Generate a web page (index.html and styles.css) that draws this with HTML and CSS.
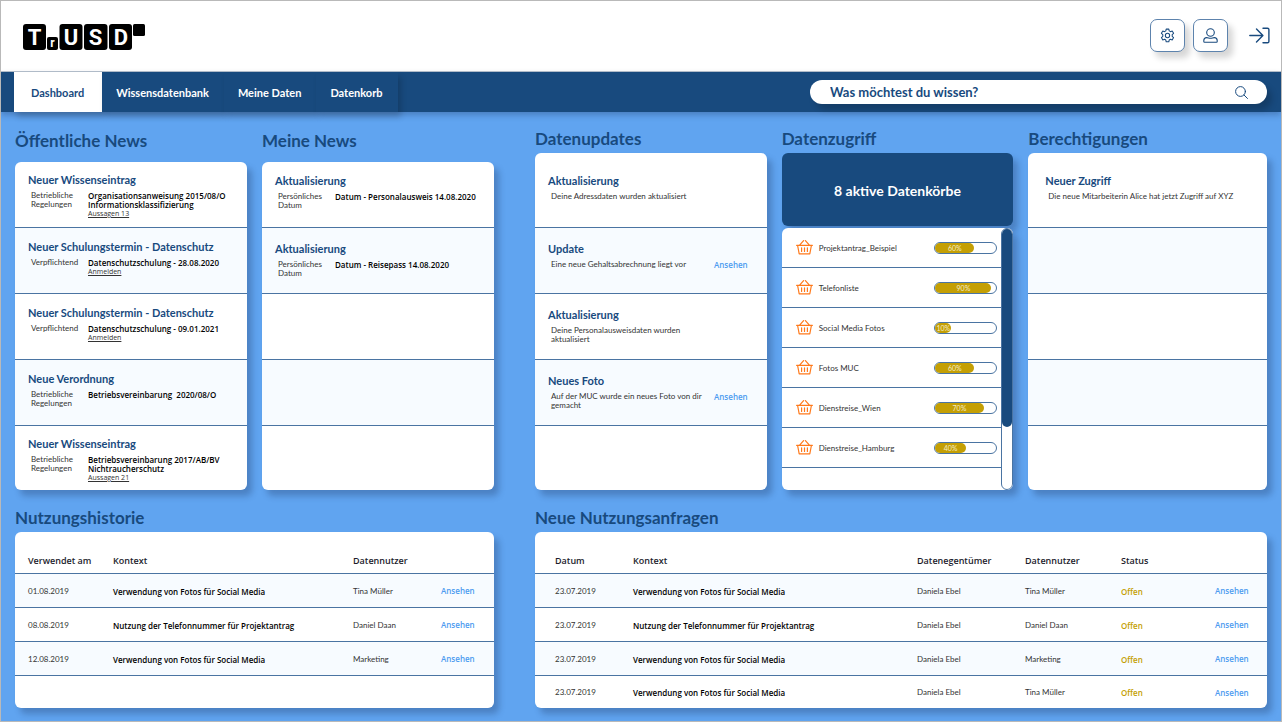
FILE: index.html
```
<!DOCTYPE html>
<html lang="de">
<head>
<meta charset="utf-8">
<meta name="viewport" content="width=device-width, initial-scale=1">
<title>TrUSD – Dashboard</title>
<link rel="stylesheet" href="styles.css">
</head>
<body>
<svg class="sprite" aria-hidden="true">
  <symbol id="basket" viewBox="0 0 17 15">
    <path d="M.6 5.300h15.800M1.600 5.500l1.600 8.400h10.600l1.600-8.400M3.600 5.100l4-4.500M13.400 5.100l-4-4.500M5.600 7.800v3.600M8.500 7.800v3.600M11.400 7.800v3.600" fill="none" stroke="currentColor" stroke-width="1.200" stroke-linecap="round" stroke-linejoin="round"/>
  </symbol>
</svg>

<header class="topbar">
  <a class="logo" href="#" aria-label="TrUSD">
    <svg width="123" height="28" viewBox="0 0 123 28" aria-hidden="true">
      <g fill="#000">
        <rect x="0" y="1" width="23" height="26" rx="3"/>
        <rect x="24" y="14" width="11" height="13" rx="2"/>
        <rect x="36.500" y="1" width="23" height="26" rx="3"/>
        <rect x="61" y="1" width="23.500" height="26" rx="3"/>
        <rect x="86" y="1" width="23" height="26" rx="3"/>
        <rect x="110" y="1" width="12" height="12" rx="1.500"/>
      </g>
      <g class="logo-letters" text-anchor="middle">
        <text x="11.500" y="22">T</text>
        <text class="logo-small" x="29.500" y="24">r</text>
        <text x="48" y="22">U</text>
        <text x="72.500" y="22">S</text>
        <text x="98" y="22">D</text>
      </g>
    </svg>
  </a>
  <div class="actions">
    <button class="tool" type="button" aria-label="Einstellungen">
      <svg width="15" height="15" viewBox="0 0 16 16" fill="none" stroke="currentColor" stroke-width="1.100" stroke-linejoin="round"><path d="M6.600 1.200h2.800l.4 1.900 1.400.8 1.800-.7 1.500 2.500-1.500 1.300v1.900l1.500 1.300-1.500 2.500-1.800-.7-1.400.8-.4 1.900H6.600l-.4-1.900-1.400-.8-1.800.7-1.500-2.500L3 8.900V7L1.500 5.700 3 3.200l1.800.7 1.400-.8z"/><circle cx="8" cy="8" r="2.300"/></svg>
    </button>
    <button class="tool" type="button" aria-label="Profil">
      <svg width="15" height="15" viewBox="0 0 15 15" fill="none" stroke="currentColor" stroke-width="1.100"><circle cx="7.500" cy="4.500" r="3.800"/><path d="M.8 13.400v-.8c0-1.900 1.200-3 3-3 1.300 0 2 .7 3.700.7s2.400-.7 3.700-.7c1.800 0 3 1.100 3 3v.8c0 .5-.3.8-.8.8H1.600c-.5 0-.8-.3-.8-.8z"/></svg>
    </button>
    <button class="exit" type="button" aria-label="Abmelden">
      <svg width="21" height="17" viewBox="0 0 21 17" fill="none" stroke="currentColor" stroke-width="1.400" stroke-linecap="round" stroke-linejoin="round"><path d="M.8 8.500h13M7.500 2l6.400 6.500L7.500 15M14 1.200h4.500c.9 0 1.400.5 1.400 1.400v11.800c0 .9-.5 1.400-1.400 1.400H14"/></svg>
    </button>
  </div>
</header>

<div class="navbar">
  <nav class="tabs">
    <a class="tab tab-active" href="#" aria-current="page">Dashboard</a>
    <a class="tab" href="#">Wissensdatenbank</a>
    <a class="tab" href="#">Meine Daten</a>
    <a class="tab" href="#">Datenkorb</a>
  </nav>
  <form class="search" role="search">
    <input type="search" placeholder="Was möchtest du wissen?" aria-label="Suche">
    <button type="button" aria-label="Suchen">
      <svg width="13" height="13" viewBox="0 0 13 13" fill="none" stroke="currentColor" stroke-width="1" stroke-linecap="round"><circle cx="5.500" cy="5.500" r="4.900"/><path d="M9 9l3.500 3.500"/></svg>
    </button>
  </form>
</div>

<main class="board">
  <div class="half half-left">
    <div class="panels">
      <section class="panel">
        <h2>Öffentliche News</h2>
        <ul class="card rows">
          <li class="entry">
            <h3>Neuer Wissenseintrag</h3>
            <div class="detail"><p class="kind">Betriebliche Regelungen</p><p class="subject">Organisationsanweisung 2015/08/O<br>Informationsklassifizierung<a href="#">Aussagen 13</a></p></div>
          </li>
          <li class="entry">
            <h3>Neuer Schulungstermin - Datenschutz</h3>
            <div class="detail"><p class="kind">Verpflichtend</p><p class="subject">Datenschutzschulung - 28.08.2020<a href="#">Anmelden</a></p></div>
          </li>
          <li class="entry">
            <h3>Neuer Schulungstermin - Datenschutz</h3>
            <div class="detail"><p class="kind">Verpflichtend</p><p class="subject">Datenschutzschulung - 09.01.2021<a href="#">Anmelden</a></p></div>
          </li>
          <li class="entry">
            <h3>Neue Verordnung</h3>
            <div class="detail"><p class="kind">Betriebliche Regelungen</p><p class="subject">Betriebsvereinbarung&nbsp; 2020/08/O</p></div>
          </li>
          <li class="entry">
            <h3>Neuer Wissenseintrag</h3>
            <div class="detail"><p class="kind">Betriebliche Regelungen</p><p class="subject">Betriebsvereinbarung 2017/AB/BV<br>Nichtraucherschutz<a href="#">Aussagen 21</a></p></div>
          </li>
        </ul>
      </section>
      <section class="panel">
        <h2>Meine News</h2>
        <ul class="card rows rows-airy">
          <li class="entry">
            <h3>Aktualisierung</h3>
            <div class="detail"><p class="kind">Persönliches Datum</p><p class="subject">Datum - Personalausweis 14.08.2020</p></div>
          </li>
          <li class="entry">
            <h3>Aktualisierung</h3>
            <div class="detail"><p class="kind">Persönliches Datum</p><p class="subject">Datum - Reisepass 14.08.2020</p></div>
          </li>
          <li class="entry"></li>
          <li class="entry"></li>
          <li class="entry"></li>
        </ul>
      </section>
    </div>
    <section class="usage">
      <h2>Nutzungshistorie</h2>
      <div class="card">
        <table class="history">
          <colgroup><col class="c-date"><col class="c-context"><col class="c-user"><col class="c-action"></colgroup>
          <thead><tr><th>Verwendet am</th><th>Kontext</th><th>Datennutzer</th><th></th></tr></thead>
          <tbody>
            <tr><td>01.08.2019</td><td class="strong">Verwendung von Fotos für Social Media</td><td>Tina Müller</td><td><a class="view" href="#">Ansehen</a></td></tr>
            <tr><td>08.08.2019</td><td class="strong">Nutzung der Telefonnummer für Projektantrag</td><td>Daniel Daan</td><td><a class="view" href="#">Ansehen</a></td></tr>
            <tr><td>12.08.2019</td><td class="strong">Verwendung von Fotos für Social Media</td><td>Marketing</td><td><a class="view" href="#">Ansehen</a></td></tr>
            <tr><td></td><td></td><td></td><td></td></tr>
          </tbody>
        </table>
      </div>
    </section>
  </div>

  <div class="half half-right">
    <div class="panels">
      <section class="panel">
        <h2>Datenupdates</h2>
        <ul class="card rows rows-airy">
          <li class="entry"><h3>Aktualisierung</h3><div class="detail"><p class="message">Deine Adressdaten wurden aktualisiert</p></div></li>
          <li class="entry"><h3>Update</h3><div class="detail"><p class="message">Eine neue Gehaltsabrechnung liegt vor</p><a class="view" href="#">Ansehen</a></div></li>
          <li class="entry"><h3>Aktualisierung</h3><div class="detail"><p class="message">Deine Personalausweisdaten wurden<br>aktualisiert</p></div></li>
          <li class="entry"><h3>Neues Foto</h3><div class="detail"><p class="message">Auf der MUC wurde ein neues Foto von dir<br>gemacht</p><a class="view" href="#">Ansehen</a></div></li>
          <li class="entry"></li>
        </ul>
      </section>
      <section class="panel">
        <h2>Datenzugriff</h2>
        <p class="banner">8 aktive Datenkörbe</p>
        <div class="card baskets">
          <ul class="basket-list">
            <li><svg class="basket"><use href="#basket"/></svg><span>Projektantrag_Beispiel</span><div class="meter" role="progressbar" aria-label="Projektantrag_Beispiel" aria-valuenow="60"><div class="fill" style="width:64%">60%</div></div></li>
            <li><svg class="basket"><use href="#basket"/></svg><span>Telefonliste</span><div class="meter" role="progressbar" aria-label="Telefonliste" aria-valuenow="90"><div class="fill" style="width:92%">90%</div></div></li>
            <li><svg class="basket"><use href="#basket"/></svg><span>Social Media Fotos</span><div class="meter" role="progressbar" aria-label="Social Media Fotos" aria-valuenow="10"><div class="fill" style="width:26%">10%</div></div></li>
            <li><svg class="basket"><use href="#basket"/></svg><span>Fotos MUC</span><div class="meter" role="progressbar" aria-label="Fotos MUC" aria-valuenow="60"><div class="fill" style="width:64%">60%</div></div></li>
            <li><svg class="basket"><use href="#basket"/></svg><span>Dienstreise_Wien</span><div class="meter" role="progressbar" aria-label="Dienstreise_Wien" aria-valuenow="70"><div class="fill" style="width:79%">70%</div></div></li>
            <li><svg class="basket"><use href="#basket"/></svg><span>Dienstreise_Hamburg</span><div class="meter" role="progressbar" aria-label="Dienstreise_Hamburg" aria-valuenow="40"><div class="fill" style="width:50%">40%</div></div></li>
          </ul>
          <div class="scroll-track"><div class="scroll-thumb"></div></div>
        </div>
      </section>
      <section class="panel">
        <h2>Berechtigungen</h2>
        <ul class="card rows rows-airy rows-inset">
          <li class="entry"><h3>Neuer Zugriff</h3><div class="detail"><p class="message">Die neue Mitarbeiterin Alice hat jetzt Zugriff auf XYZ</p></div></li>
          <li class="entry"></li>
          <li class="entry"></li>
          <li class="entry"></li>
          <li class="entry"></li>
        </ul>
      </section>
    </div>
    <section class="usage">
      <h2>Neue Nutzungsanfragen</h2>
      <div class="card">
        <table class="requests">
          <colgroup><col class="c-date"><col class="c-context"><col class="c-owner"><col class="c-user"><col class="c-status"><col class="c-action"></colgroup>
          <thead><tr><th>Datum</th><th>Kontext</th><th>Datenegentümer</th><th>Datennutzer</th><th>Status</th><th></th></tr></thead>
          <tbody>
            <tr><td>23.07.2019</td><td class="strong">Verwendung von Fotos für Social Media</td><td>Daniela Ebel</td><td>Tina Müller</td><td class="open">Offen</td><td><a class="view" href="#">Ansehen</a></td></tr>
            <tr><td>23.07.2019</td><td class="strong">Nutzung der Telefonnummer für Projektantrag</td><td>Daniela Ebel</td><td>Daniel Daan</td><td class="open">Offen</td><td><a class="view" href="#">Ansehen</a></td></tr>
            <tr><td>23.07.2019</td><td class="strong">Verwendung von Fotos für Social Media</td><td>Daniela Ebel</td><td>Marketing</td><td class="open">Offen</td><td><a class="view" href="#">Ansehen</a></td></tr>
            <tr><td>23.07.2019</td><td class="strong">Verwendung von Fotos für Social Media</td><td>Daniela Ebel</td><td>Tina Müller</td><td class="open">Offen</td><td><a class="view" href="#">Ansehen</a></td></tr>
          </tbody>
        </table>
      </div>
    </section>
  </div>
</main>
</body>
</html>
```
FILE: styles.css
```
:root {
  --navy: #184a7e;
  --sky: #60a4f0;
  --tint: #f7fbff;
  --line: #4a74a2;
  --gold: #c49f04;
  --shadow: 5px 6px 6px rgba(20, 40, 80, .28);
  --strong-font: "Open Sans", "Noto Sans", sans-serif;
}

* { box-sizing: border-box; }

body {
  margin: 0;
  min-height: 100vh;
  display: flex;
  flex-direction: column;
  border: 1px solid #b9b9b9;
  background: var(--sky);
  color: #333;
  font: 8px/9px Lato, "Open Sans", sans-serif;
}

h2, h3, p, ul { margin: 0; padding: 0; }
ul { list-style: none; }
a { color: inherit; }
button { border: 0; padding: 0; background: none; color: var(--navy); display: grid; place-items: center; cursor: pointer; }
.sprite { display: none; }

/* Header */
.topbar {
  display: flex;
  justify-content: space-between;
  align-items: center;
  min-height: 71px;
  padding: 0 11px 2px 22px;
  background: #fff;
  border-bottom: 1px solid #b9c3cf;
}
.logo { padding-top: 3px; }
.logo svg { display: block; }
.logo-letters { fill: #fff; font: bold 22px Roboto, "Liberation Sans", sans-serif; }
.logo-letters .logo-small { font-size: 12px; }
.actions { display: flex; align-items: center; gap: 8px; }
.tool {
  width: 35px;
  height: 33px;
  border: 1px solid #5d83ad;
  border-radius: 7px;
  background: #fff;
  box-shadow: 5px 6px 6px rgba(0, 0, 0, .16);
}
.exit { margin-left: 13px; }

/* Navigation */
.navbar {
  display: flex;
  justify-content: space-between;
  align-items: stretch;
  min-height: 40px;
  padding: 0 14px 0 13px;
  background: var(--navy);
  box-shadow: 0 3px 6px rgba(20, 40, 80, .3);
}
.tabs { display: flex; }
.tab {
  display: flex;
  align-items: center;
  padding: 0 15px 0 14px;
  background: var(--navy);
  box-shadow: 3px 5px 6px rgba(0, 0, 0, .18);
  color: #fff;
  font-size: 11px;
  font-weight: 700;
  text-decoration: none;
}
.tab-active { background: #fff; color: var(--navy); padding: 0 18px 0 17px; }
.search {
  display: flex;
  align-items: center;
  align-self: center;
  width: 37%;
  max-width: 457px;
  height: 24px;
  padding: 0 19px 0 20px;
  border-radius: 12px;
  background: #fff;
  box-shadow: 5px 6px 6px rgba(0, 0, 0, .18);
}
.search input {
  flex: 1;
  min-width: 0;
  padding: 0;
  border: 0;
  outline: 0;
  background: none;
  color: var(--navy);
  font: 700 13px/16px Lato, "Open Sans", sans-serif;
}
.search input::placeholder { color: var(--navy); opacity: 1; }

/* Board */
.board { flex: 1; display: flex; gap: 41px; padding: 17px 14px 13px; }
.half { display: flex; flex-direction: column; gap: 18px; min-width: 0; }
.half-left { flex: 479; }
.half-right { flex: 732; }
.panels { display: grid; flex: 1; gap: 15px; grid-template-columns: 1fr 1fr; }
.half-right .panels { grid-template-columns: 232fr 232fr 239fr; }
.panel { display: flex; flex-direction: column; min-width: 0; }
h2 { margin-bottom: 4px; color: var(--navy); font-size: 17px; line-height: 20px; font-weight: 700; }
.half-left .panel h2 { padding: 2px 0 7px; }
.card { border-radius: 6px; background: #fff; box-shadow: var(--shadow); overflow: hidden; }

/* News and update rows */
.rows { flex: 1; display: flex; flex-direction: column; }
.entry { min-height: 66px; padding: 12px 13px 0; border-bottom: 1px solid var(--line); }
.entry:first-child { padding-top: 11px; }
.entry:last-child { flex: 1; min-height: 60px; padding-top: 11px; border-bottom: 0; }
.entry:nth-child(even) { background: var(--tint); }
.rows-airy .entry { padding-top: 14px; }
.rows-airy .entry:first-child { padding-top: 12px; }
.half-right .entry:first-child { min-height: 75px; padding-top: 21px; }
.rows-inset .entry { padding-left: 17px; }
h3 { margin-bottom: 5px; color: var(--navy); font-size: 11px; line-height: 13px; font-weight: 700; }
.detail { display: flex; padding-left: 3px; }
.kind { width: 57px; padding-right: 8px; }
.subject { flex: 1; color: #000; font-family: var(--strong-font); font-weight: 600; white-space: nowrap; }
.subject a { display: block; color: #333; font-size: 7px; font-weight: 400; }
.message { flex: 1; white-space: nowrap; }
.view { color: #4d9bf0; font-family: var(--strong-font); font-weight: 600; text-decoration: none; }
.detail .view { margin-right: 6px; }

/* Data baskets */
.banner {
  display: grid;
  place-items: center;
  min-height: 73px;
  padding-top: 2px;
  margin-bottom: 2px;
  border-radius: 6px;
  background: var(--navy);
  box-shadow: var(--shadow);
  color: #fff;
  font-size: 14px;
  line-height: 18px;
  font-weight: 700;
}
.baskets { flex: 1; display: flex; }
.basket-list { flex: 1; }
.basket-list li {
  display: flex;
  align-items: center;
  gap: 6px;
  height: 40px;
  padding: 0 4px 0 14px;
  border-bottom: 1px solid var(--line);
}
.basket { width: 17px; height: 15px; color: #ff7a1c; }
.basket-list span { padding-top: 1px; }
.meter {
  width: 63px;
  height: 12px;
  margin-left: auto;
  border: 1px solid var(--line);
  border-radius: 6px;
  background: #fff;
}
.fill { height: 10px; border-radius: 5px; background: var(--gold); color: #f4ecc8; font-size: 7px; line-height: 10px; text-align: center; }
.scroll-track { width: 12px; border: 1px solid var(--line); border-radius: 6px; }
.scroll-thumb { height: 76%; border-radius: 5px; background: var(--navy); }

/* Usage tables */
table { width: 100%; border-collapse: collapse; table-layout: fixed; }
th, td { height: 34px; padding: 2px 0 0; text-align: left; white-space: nowrap; border-top: 1px solid var(--line); }
th { height: 41px; padding: 17px 0 0; border-top: 0; color: #1c1c2c; font-family: var(--strong-font); font-size: 9px; line-height: 12px; font-weight: 600; }
tbody tr:last-child td { height: 33px; }
tbody tr:nth-child(odd) { background: var(--tint); }
.strong { color: #000; font-family: var(--strong-font); font-weight: 600; }
.open { color: var(--gold); font-family: var(--strong-font); font-weight: 600; }
.history th:first-child, .history td:first-child { padding-left: 13px; }
.requests th:first-child, .requests td:first-child { padding-left: 20px; }
.c-date { width: 98px; }
.history .c-user { width: 88px; }
.history .c-action { width: 53px; }
.c-owner { width: 108px; }
.requests .c-user { width: 96px; }
.c-status { width: 94px; }
.requests .c-action { width: 52px; }
```
